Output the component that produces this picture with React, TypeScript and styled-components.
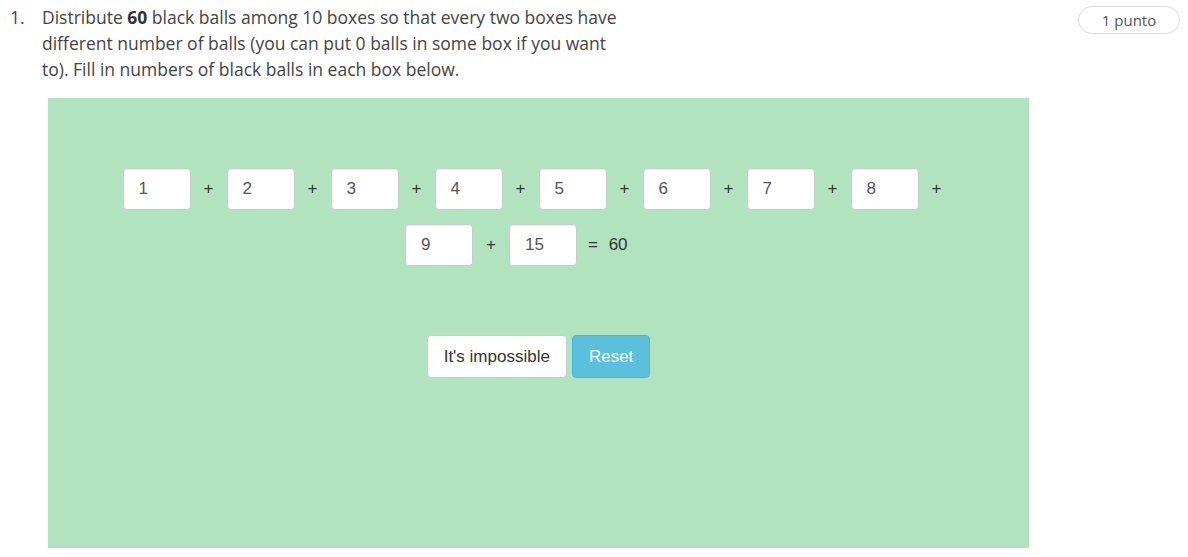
import React from "react";
import styled, { createGlobalStyle } from "styled-components";

const Global = createGlobalStyle`
  html, body { margin: 0; padding: 0; background: #fff; }
  body { font-family: "Open Sans", "Noto Sans", sans-serif; color: #333; }
`;

const Page = styled.div`
  padding: 4px 8px 0 10px;
`;

const Header = styled.div`
  display: flex;
  align-items: flex-start;
`;

const Num = styled.div`
  width: 32px;
  flex: none;
  font-size: 17.5px;
  line-height: 26px;
  color: #444;
`;

const QText = styled.div`
  width: 590px;
  font-size: 17.5px;
  line-height: 26px;
  color: #444;
  b { font-weight: 700; color: #333; }
`;

const Badge = styled.div`
  margin-left: auto;
  margin-top: 2px;
  width: 100px;
  height: 26px;
  border: 1px solid #dcdcdc;
  border-radius: 14px;
  display: flex;
  align-items: center;
  justify-content: center;
  font-size: 15px;
  color: #555;
`;

const Panel = styled.div`
  margin: 16px 0 0 38px;
  width: 981px;
  height: 450px;
  background: #b2e3bf;
  box-sizing: border-box;
  padding-top: 70px;
  display: flex;
  flex-direction: column;
  align-items: center;
  font-family: "Liberation Sans", Arial, sans-serif;
`;

const Row = styled.div<{ $mt?: number }>`
  display: flex;
  align-items: center;
  justify-content: center;
  margin-top: ${(p) => p.$mt ?? 0}px;
`;

const Box = styled.input`
  width: 68px;
  height: 42px;
  box-sizing: border-box;
  border: 1px solid #ccc;
  border-radius: 4px;
  background: #fff;
  box-shadow: inset 0 1px 1px rgba(0, 0, 0, 0.075);
  padding: 0 0 0 15px;
  font-family: "Liberation Sans", Arial, sans-serif;
  font-size: 17px;
  color: #555;
  outline: none;
`;

const Op = styled.span`
  width: 36px;
  text-align: center;
  font-size: 17px;
  color: #333;
`;

const Sum = styled.span`
  width: 95px;
  box-sizing: border-box;
  padding-left: 11px;
  font-size: 17px;
  color: #333;
  word-spacing: 6px;
`;

const Buttons = styled.div`
  display: flex;
  gap: 5px;
  margin-top: 69px;
`;

const Btn = styled.button<{ $info?: boolean }>`
  height: 43px;
  padding: 0 16px;
  border-radius: 4px;
  font-family: "Liberation Sans", Arial, sans-serif;
  font-size: 17px;
  border: 1px solid ${(p) => (p.$info ? "#46b8da" : "#ccc")};
  background: ${(p) => (p.$info ? "#5bc0de" : "#fff")};
  color: ${(p) => (p.$info ? "#fff" : "#333")};
  cursor: pointer;
`;

const first = ["1", "2", "3", "4", "5", "6", "7", "8"];

export default function App() {
  return (
    <>
      <Global />
      <Page>
        <Header>
          <Num>1.</Num>
          <QText>
            Distribute <b>60</b> black balls among 10 boxes so that every two boxes have
            different number of balls (you can put 0 balls in some box if you want
            to). Fill in numbers of black balls in each box below.
          </QText>
          <Badge>1 punto</Badge>
        </Header>
        <Panel>
          <Row>
            {first.map((v) => (
              <React.Fragment key={v}>
                <Box defaultValue={v} />
                <Op>+</Op>
              </React.Fragment>
            ))}
          </Row>
          <Row $mt={14}>
            <Box defaultValue="9" />
            <Op>+</Op>
            <Box defaultValue="15" />
            <Sum>= 60</Sum>
          </Row>
          <Buttons>
            <Btn>It's impossible</Btn>
            <Btn $info>Reset</Btn>
          </Buttons>
        </Panel>
      </Page>
    </>
  );
}
